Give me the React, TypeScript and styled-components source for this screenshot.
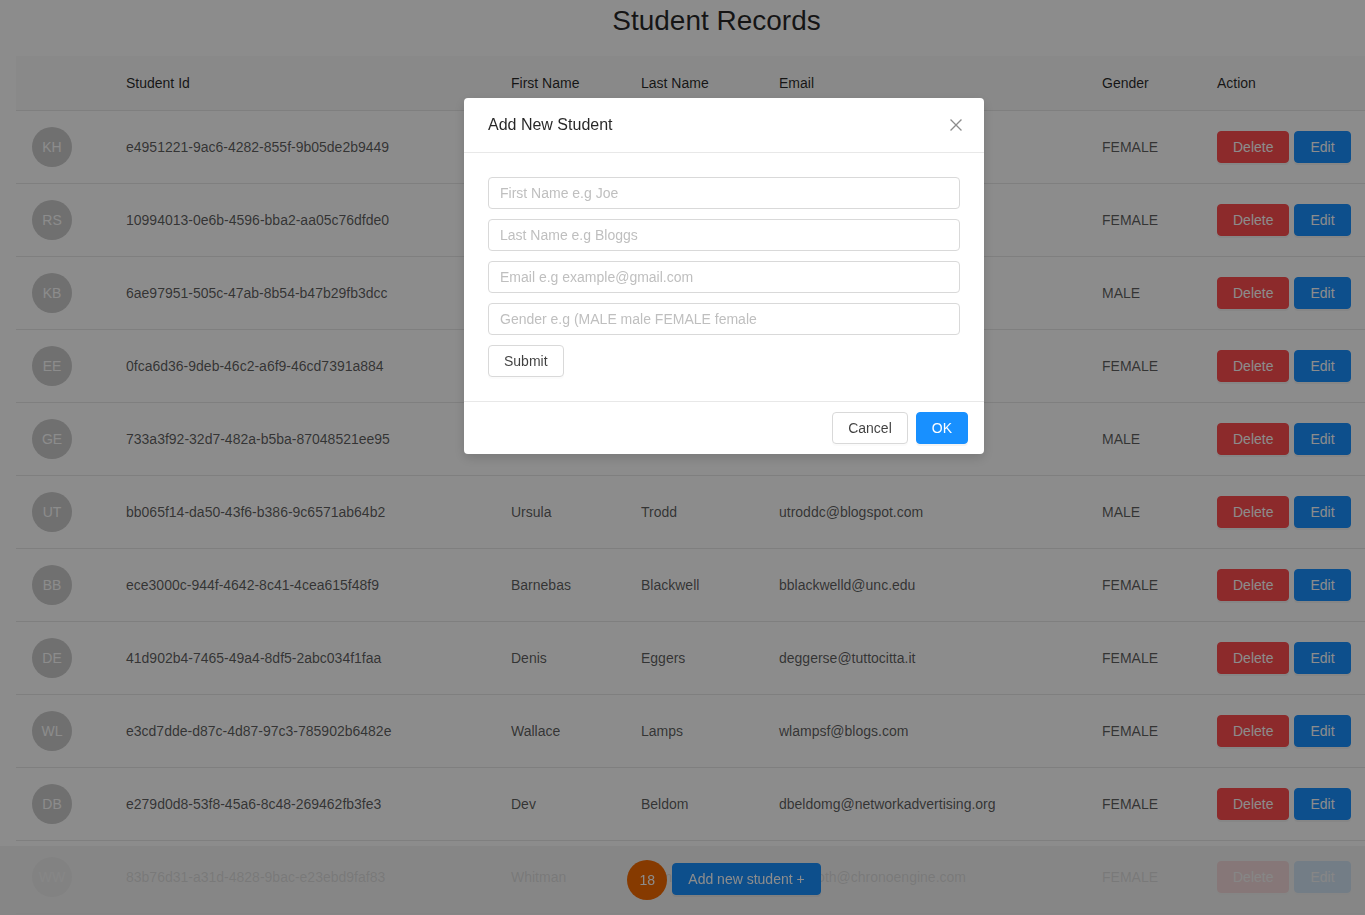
import React from "react";
import styled, { createGlobalStyle } from "styled-components";

const GlobalStyle = createGlobalStyle`
  html, body {
    margin: 0;
    padding: 0;
    overflow: hidden;
    background: #ffffff;
  }
  body {
    font-family: "Liberation Sans", Arial, Helvetica, sans-serif;
    font-size: 14px;
    line-height: 1.5715;
    color: rgba(0, 0, 0, 0.65);
  }
  *, *::before, *::after { box-sizing: border-box; }
`;

const Page = styled.div`
  width: 1433px;
  padding: 0 16px;
`;

const Title = styled.h1`
  margin: 2px 0 16px;
  font-size: 28px;
  line-height: 38px;
  font-weight: normal;
  text-align: center;
  color: rgba(0, 0, 0, 0.85);
`;

const Table = styled.table`
  width: 1401px;
  border-collapse: collapse;
  border-spacing: 0;
  table-layout: fixed;
`;

const Th = styled.th<{ $w: number }>`
  width: ${(p) => p.$w}px;
  text-align: left;
  font-weight: normal;
  background: #fafafa;
  padding: 16px;
  line-height: 22px;
  border-bottom: 1px solid #e8e8e8;
  color: rgba(0, 0, 0, 0.85);
`;

const Td = styled.td`
  padding: 16px;
  line-height: 22px;
  border-bottom: 1px solid #e8e8e8;
  vertical-align: middle;
  white-space: nowrap;
  overflow: hidden;
`;

const Avatar = styled.div<{ $bg: string }>`
  flex: none;
  width: 40px;
  height: 40px;
  border-radius: 50%;
  background: ${(p) => p.$bg};
  color: #ffffff;
  display: flex;
  align-items: center;
  justify-content: center;
  font-size: 14px;
  line-height: 40px;
`;

const Actions = styled.div`
  display: flex;
  gap: 5px;
`;

const Btn = styled.button<{ $kind: "danger" | "primary" | "default" }>`
  height: 32px;
  padding: 0 15px;
  border-radius: 4px;
  font-family: inherit;
  font-size: 14px;
  line-height: 30px;
  cursor: pointer;
  white-space: nowrap;
  border: 1px solid
    ${(p) =>
      p.$kind === "danger" ? "#ff4d4f" : p.$kind === "primary" ? "#1890ff" : "#d9d9d9"};
  background: ${(p) =>
    p.$kind === "danger" ? "#ff4d4f" : p.$kind === "primary" ? "#1890ff" : "#ffffff"};
  color: ${(p) => (p.$kind === "default" ? "rgba(0, 0, 0, 0.75)" : "#ffffff")};
  box-shadow: ${(p) => (p.$kind === "default" ? "0 2px 0 rgba(0,0,0,0.015)" : "0 2px 0 rgba(0,0,0,0.045)")};
`;

const Footer = styled.footer`
  position: fixed;
  left: 0;
  bottom: 0;
  width: 1448px;
  height: 69px;
  z-index: 10;
  display: flex;
  align-items: center;
  justify-content: center;
  gap: 5px;
  padding-bottom: 1px;
  background: rgba(242, 242, 242, 0.85);
`;

const FooterButton = styled(Btn)`
  margin-bottom: 2px;
`;

const Mask = styled.div`
  position: fixed;
  inset: 0;
  z-index: 1000;
  background: rgba(0, 0, 0, 0.45);
`;

const ModalWrap = styled.div`
  position: fixed;
  top: 0;
  left: 0;
  bottom: 0;
  width: 1448px;
  z-index: 1001;
  display: flex;
  justify-content: center;
  align-items: flex-start;
  padding-top: 98px;
`;

const Modal = styled.div`
  position: relative;
  width: 520px;
  background: #ffffff;
  border-radius: 4px;
  box-shadow: 0 4px 12px rgba(0, 0, 0, 0.15);
`;

const ModalHeader = styled.div`
  padding: 16px 24px;
  border-bottom: 1px solid #e8e8e8;
`;

const ModalTitle = styled.div`
  font-size: 16px;
  line-height: 22px;
  color: rgba(0, 0, 0, 0.85);
`;

const CloseButton = styled.button`
  position: absolute;
  top: 0;
  right: 0;
  width: 56px;
  height: 54px;
  border: none;
  background: transparent;
  padding: 0;
  display: flex;
  align-items: center;
  justify-content: center;
  color: rgba(0, 0, 0, 0.45);
  cursor: pointer;
`;

const ModalBody = styled.div`
  padding: 24px;
`;

const Form = styled.form`
  display: flex;
  flex-direction: column;
  align-items: flex-start;
  gap: 10px;
`;

const Input = styled.input`
  width: 100%;
  height: 32px;
  padding: 4px 11px;
  border: 1px solid #d9d9d9;
  border-radius: 4px;
  font-family: inherit;
  font-size: 14px;
  color: rgba(0, 0, 0, 0.65);
  background: #ffffff;
  outline: none;
  &::placeholder {
    color: #bfbfbf;
  }
`;

const ModalFooter = styled.div`
  padding: 10px 16px;
  border-top: 1px solid #e8e8e8;
  display: flex;
  justify-content: flex-end;
  gap: 8px;
`;

type Student = {
  id: string;
  first: string;
  last: string;
  email: string;
  gender: string;
};

const students: Student[] = [
  { id: "e4951221-9ac6-4282-855f-9b05de2b9449", first: "Kathe", last: "Hulme", email: "khulme7@ed.gov", gender: "FEMALE" },
  { id: "10994013-0e6b-4596-bba2-aa05c76dfde0", first: "Rosa", last: "Shire", email: "rshire8@nih.gov", gender: "FEMALE" },
  { id: "6ae97951-505c-47ab-8b54-b47b29fb3dcc", first: "Kip", last: "Bonds", email: "kbonds9@cnn.com", gender: "MALE" },
  { id: "0fca6d36-9deb-46c2-a6f9-46cd7391a884", first: "Eada", last: "Eddy", email: "eeddya@ihg.com", gender: "FEMALE" },
  { id: "733a3f92-32d7-482a-b5ba-87048521ee95", first: "Gus", last: "Elby", email: "gelbyb@fc2.com", gender: "MALE" },
  { id: "bb065f14-da50-43f6-b386-9c6571ab64b2", first: "Ursula", last: "Trodd", email: "utroddc@blogspot.com", gender: "MALE" },
  { id: "ece3000c-944f-4642-8c41-4cea615f48f9", first: "Barnebas", last: "Blackwell", email: "bblackwelld@unc.edu", gender: "FEMALE" },
  { id: "41d902b4-7465-49a4-8df5-2abc034f1faa", first: "Denis", last: "Eggers", email: "deggerse@tuttocitta.it", gender: "FEMALE" },
  { id: "e3cd7dde-d87c-4d87-97c3-785902b6482e", first: "Wallace", last: "Lamps", email: "wlampsf@blogs.com", gender: "FEMALE" },
  { id: "e279d0d8-53f8-45a6-8c48-269462fb3fe3", first: "Dev", last: "Beldom", email: "dbeldomg@networkadvertising.org", gender: "FEMALE" },
  { id: "83b76d31-a31d-4828-9bac-e23ebd9faf83", first: "Whitman", last: "Wilmot", email: "wwilmoth@chronoengine.com", gender: "FEMALE" },
];

const columns = [
  { key: "avatar", label: "", w: 94 },
  { key: "id", label: "Student Id", w: 385 },
  { key: "first", label: "First Name", w: 130 },
  { key: "last", label: "Last Name", w: 138 },
  { key: "email", label: "Email", w: 323 },
  { key: "gender", label: "Gender", w: 115 },
  { key: "action", label: "Action", w: 216 },
];

const initials = (s: Student) => `${s.first[0]}${s.last[0]}`.toUpperCase();

const CloseIcon = () => (
  <svg width="12" height="12" viewBox="0 0 12 12" fill="none">
    <path d="M1 1L11 11M11 1L1 11" stroke="currentColor" strokeWidth="1.3" strokeLinecap="square" />
  </svg>
);

export default function App() {
  return (
    <>
      <GlobalStyle />
      <Page>
        <Title>Student Records</Title>
        <Table>
          <thead>
            <tr>
              {columns.map((c) => (
                <Th key={c.key} $w={c.w}>
                  {c.label}
                </Th>
              ))}
            </tr>
          </thead>
          <tbody>
            {students.map((s) => (
              <tr key={s.id}>
                <Td>
                  <Avatar $bg="#cccccc">{initials(s)}</Avatar>
                </Td>
                <Td>{s.id}</Td>
                <Td>{s.first}</Td>
                <Td>{s.last}</Td>
                <Td>{s.email}</Td>
                <Td>{s.gender}</Td>
                <Td>
                  <Actions>
                    <Btn $kind="danger">Delete</Btn>
                    <Btn $kind="primary">Edit</Btn>
                  </Actions>
                </Td>
              </tr>
            ))}
          </tbody>
        </Table>
      </Page>

      <Footer>
        <Avatar $bg="#f56a00">18</Avatar>
        <FooterButton $kind="primary">Add new student +</FooterButton>
      </Footer>

      <Mask />
      <ModalWrap>
        <Modal>
          <ModalHeader>
            <ModalTitle>Add New Student</ModalTitle>
          </ModalHeader>
          <CloseButton aria-label="Close">
            <CloseIcon />
          </CloseButton>
          <ModalBody>
            <Form onSubmit={(e) => e.preventDefault()}>
              <Input placeholder="First Name e.g Joe" />
              <Input placeholder="Last Name e.g Bloggs" />
              <Input placeholder="Email e.g example@gmail.com" />
              <Input placeholder="Gender e.g (MALE male FEMALE female" />
              <Btn $kind="default" type="submit">Submit</Btn>
            </Form>
          </ModalBody>
          <ModalFooter>
            <Btn $kind="default">Cancel</Btn>
            <Btn $kind="primary">OK</Btn>
          </ModalFooter>
        </Modal>
      </ModalWrap>
    </>
  );
}
